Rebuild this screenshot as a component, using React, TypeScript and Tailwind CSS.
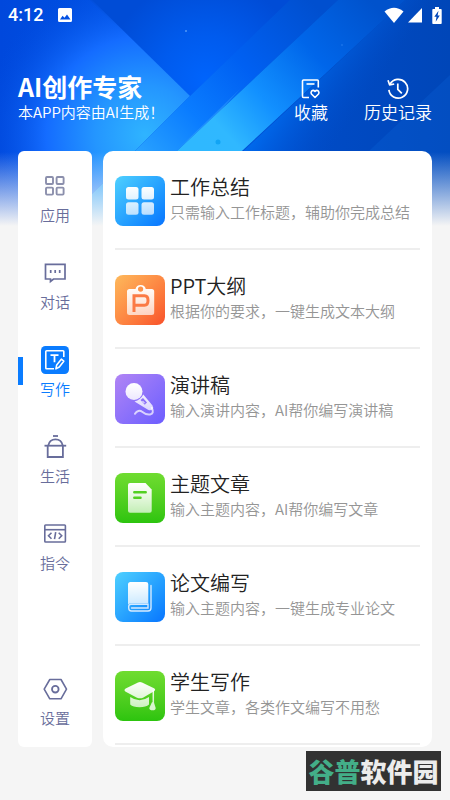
import type { ReactNode } from "react";

const HeaderBackground = () => {
  return (
    <svg
      className="absolute inset-x-0 top-0 -z-10 h-[226px] w-full"
      viewBox="0 0 450 226"
      preserveAspectRatio="none"
      aria-hidden="true"
    >
      <defs>
        <linearGradient id="base" x1="0" y1="0" x2="1" y2="0">
          <stop offset="0" stopColor="#0048dc" />
          <stop offset="0.4" stopColor="#0056e6" />
          <stop offset="0.7" stopColor="#004bc6" />
          <stop offset="1" stopColor="#0046b8" />
        </linearGradient>
        <radialGradient id="glow" gradientUnits="userSpaceOnUse" cx="145" cy="135" r="165">
          <stop offset="0" stopColor="#2fb4ff" />
          <stop offset="0.3" stopColor="#2496ff" />
          <stop offset="0.6" stopColor="#146cff" />
          <stop offset="1" stopColor="#004ce0" stopOpacity="0" />
        </radialGradient>
        <radialGradient id="mid" gradientUnits="userSpaceOnUse" cx="205" cy="80" r="100">
          <stop offset="0" stopColor="#0064fc" />
          <stop offset="0.45" stopColor="#005bee" />
          <stop offset="1" stopColor="#004cd6" />
        </radialGradient>
        <linearGradient id="bandA" gradientUnits="userSpaceOnUse" x1="310" y1="0" x2="140" y2="160">
          <stop offset="0" stopColor="#004fcf" />
          <stop offset="0.4" stopColor="#0060f2" />
          <stop offset="0.7" stopColor="#0a7cff" />
          <stop offset="1" stopColor="#2aa4ff" />
        </linearGradient>
        <linearGradient id="bandB" gradientUnits="userSpaceOnUse" x1="370" y1="0" x2="205" y2="150">
          <stop offset="0" stopColor="#0052cc" />
          <stop offset="0.35" stopColor="#0066ea" />
          <stop offset="0.65" stopColor="#1290ff" />
          <stop offset="0.88" stopColor="#30b8ff" />
          <stop offset="1" stopColor="#2fb8ff" />
        </linearGradient>
        <linearGradient id="bandC" gradientUnits="userSpaceOnUse" x1="255" y1="120" x2="320" y2="165">
          <stop offset="0" stopColor="#0070f4" />
          <stop offset="1" stopColor="#004fcc" stopOpacity="0" />
        </linearGradient>
        <linearGradient id="fade" x1="0" y1="0" x2="0" y2="1">
          <stop offset="0" stopColor="#f5f5f5" stopOpacity="0" />
          <stop offset="1" stopColor="#f5f5f5" />
        </linearGradient>
      </defs>
      <rect width="450" height="226" fill="url(#base)" />
      <path d="M90 0L292 0L188 98Z" fill="url(#mid)" />
      <path d="M0 0H92L190 96L60 226H0Z" fill="url(#glow)" />
      <path d="M290 0H338L178 150L98 226H60L190 96Z" fill="url(#bandA)" />
      <path d="M405 0L163 226H450V0Z" fill="url(#bandC)" />
      <path d="M338 0H405L243 150L163 226H98L178 150Z" fill="url(#bandB)" />
      <path d="M177 150L240 89L222 109L195 134Z" fill="#5dcbff" opacity="0.25" />
      <path d="M450 75L370 150L300 226H450Z" fill="#0a62d8" opacity="0.3" />
      <circle cx="186" cy="31" r="0.8" fill="#8cc4ff" />
      <circle cx="218" cy="142" r="2.5" fill="#12a4f4" />
      <circle cx="342" cy="45" r="0.8" fill="#2a80f0" />
      <rect y="152" width="450" height="74" fill="url(#fade)" />
    </svg>
  );
};

const StatusBar = () => {
  return (
    <div className="flex h-[30px] items-center px-2 text-white">
      <span className="font-[Roboto,sans-serif] text-lg leading-5 font-medium">4:12</span>
      <svg className="ml-[14px]" width="16" height="16" viewBox="0 0 16 16" aria-hidden="true">
        <path
          fillRule="evenodd"
          fill="currentColor"
          d="M2.5 1h11A1.5 1.5 0 0 1 15 2.5v11a1.5 1.5 0 0 1-1.5 1.5h-11A1.5 1.5 0 0 1 1 13.5v-11A1.5 1.5 0 0 1 2.5 1ZM3 12.500h10.500L10 7.500 7.500 10.800 5.600 8.700Z"
        />
      </svg>
      <div className="ml-auto flex items-center">
        <svg width="20" height="17" viewBox="0 0 20 17" aria-hidden="true">
          <path d="M0.500 4.500Q10-3 19.500 4.500L10 16Z" fill="currentColor" />
        </svg>
        <svg className="ml-1" width="14" height="16" viewBox="0 0 14 16" aria-hidden="true">
          <path d="M14 1V15.500H0Z" fill="currentColor" />
        </svg>
        <svg className="ml-[10px]" width="10" height="17" viewBox="0 0 10 17" aria-hidden="true">
          <path d="M3 0H7V2H9Q9.700 2 9.700 3V16Q9.700 17 9 17H1Q0.300 17 0.300 16V3Q0.300 2 1 2H3Z" fill="currentColor" />
          <path d="M6.500 3.800L2.300 9.800H4.500L3.700 14.800L7.800 8.600H5.600Z" fill="#0046b8" />
        </svg>
      </div>
    </div>
  );
};

const CollectIcon = () => (
  <svg width="22" height="22" viewBox="0 0 22 22" fill="none" stroke="currentColor" strokeWidth="1.6" aria-hidden="true">
    <path d="M18.300 9.500V3Q18.300 2 17.300 2H3.500Q2.500 2 2.500 3V18.500Q2.500 19.500 3.500 19.500H9" />
    <path d="M6.500 6H14.500" />
    <path
      d="M15 19.500L11.500 16Q10.500 14.500 11.500 13.100Q13.400 11.600 15 13.500Q16.600 11.600 18.500 13.100Q19.500 14.500 18.500 16Z"
      strokeLinejoin="round"
    />
  </svg>
);

const HistoryIcon = () => (
  <svg width="22" height="22" viewBox="0 0 22 22" fill="none" stroke="currentColor" strokeWidth="1.7" aria-hidden="true">
    <path d="M3 6.200A9.400 9.400 0 1 1 1.900 11.800" />
    <path d="M1 2.200L2.600 6.800L7.200 6" strokeLinejoin="round" />
    <path d="M10.800 5.500V11.300L14.800 15.300" />
  </svg>
);

const AppsIcon = () => (
  <svg width="28" height="28" viewBox="0 0 28 28" fill="none" stroke="#8b8fac" strokeWidth="1.9" aria-hidden="true">
    <rect x="5" y="5" width="7" height="7" rx="1" />
    <rect x="15.600" y="5" width="7" height="7" rx="1" />
    <rect x="5" y="15.600" width="7" height="7" rx="1" />
    <rect x="15.600" y="15.600" width="7" height="7" rx="1" />
  </svg>
);

const ChatIcon = () => (
  <svg width="28" height="28" viewBox="0 0 28 28" fill="none" stroke="currentColor" strokeWidth="1.7" aria-hidden="true">
    <path d="M4.500 5.400H24V20H12.500L9.500 22.500V20H4.500Z" />
    <path d="M9.700 11V14M14.200 11V14M18.700 11V14" />
  </svg>
);

const WriteIcon = () => (
  <svg width="28" height="28" viewBox="0 0 28 28" fill="none" stroke="#fff" strokeWidth="1.6" aria-hidden="true">
    <rect width="28" height="28" rx="4.500" fill="#0a7cff" stroke="none" />
    <path d="M22.800 11V5.500Q22.800 4.700 22 4.700H5.600Q4.800 4.700 4.800 5.500V22Q4.800 22.800 5.600 22.800H13" />
    <path d="M9.500 9.200H17.500M13.500 9.200V16.200" strokeWidth="1.8" />
    <path d="M14.900 22.900L15.700 18.900L20.300 13.200L22.800 15.200L18.300 21Z" strokeLinejoin="round" />
  </svg>
);

const LifeIcon = () => (
  <svg width="28" height="28" viewBox="0 0 28 28" fill="none" stroke="currentColor" strokeWidth="1.8" aria-hidden="true">
    <path d="M12 3H17" />
    <path d="M7.300 12.500Q8.500 6.400 14.500 6.400Q20.500 6.400 21.700 12.500" />
    <path d="M3.500 12.700H25.200" />
    <path d="M6.700 12.700V24H21.900V12.700" />
  </svg>
);

const CommandIcon = () => (
  <svg width="28" height="28" viewBox="0 0 28 28" fill="none" stroke="currentColor" strokeWidth="1.6" aria-hidden="true">
    <rect x="3.800" y="5" width="20.600" height="17" rx="0.800" />
    <path d="M3.800 9.700H24.400" />
    <path d="M10.500 12.700L7.500 15.700L10.500 18.700M17.700 12.700L20.700 15.700L17.700 18.700M14.700 12.200L13.500 19.200" />
  </svg>
);

const SettingIcon = () => (
  <svg width="28" height="28" viewBox="0 0 28 28" fill="none" stroke="currentColor" strokeWidth="1.6" aria-hidden="true">
    <path d="M8.800 4.500H20L25.500 14.200L20 23.800H8.800L3.200 14.200Z" strokeLinejoin="round" />
    <circle cx="14.300" cy="14.200" r="3.300" strokeWidth="1.8" />
  </svg>
);

// White glyphs on the tiles fade slightly towards the bottom
const Tile = ({ className, children }: { className: string; children: ReactNode }) => (
  <span className={`block size-[50px] shrink-0 overflow-hidden rounded-lg ${className}`}>
    <svg width="50" height="50" viewBox="0 0 50 50" fill="none" aria-hidden="true">
      <defs>
        <linearGradient id="glyph" gradientUnits="userSpaceOnUse" x1="0" y1="10" x2="0" y2="40">
          <stop offset="0" stopColor="#fff" />
          <stop offset="1" stopColor="#fff" stopOpacity="0.68" />
        </linearGradient>
      </defs>
      {children}
    </svg>
  </span>
);

const tileBlue = "bg-linear-to-br from-[#4fd0ff] to-[#0a74ff]";
const tileOrange = "bg-linear-to-br from-[#fdb95c] to-[#f8502a]";
const tilePurple = "bg-linear-to-br from-[#b184f4] to-[#6c5cff]";
const tileGreen = "bg-linear-to-b from-[#6fdc30] to-[#2cc40e]";

const items = [
  {
    title: "工作总结",
    desc: "只需输入工作标题，辅助你完成总结",
    icon: (
      <Tile className={tileBlue}>
        <g fill="url(#glyph)">
          <rect x="11" y="11" width="12.500" height="12.500" rx="2.500" />
          <rect x="26.500" y="11" width="12.500" height="12.500" rx="2.500" />
          <rect x="11" y="26.300" width="12.500" height="12.500" rx="2.500" />
          <rect x="26.500" y="26.300" width="12.500" height="12.500" rx="2.500" />
        </g>
      </Tile>
    ),
  },
  {
    title: "PPT大纲",
    desc: "根据你的要求，一键生成文本大纲",
    icon: (
      <Tile className={tileOrange}>
        <path
          fill="url(#glyph)"
          fillRule="evenodd"
          d="M14.500 14H20.500A5.300 5.300 0 0 1 30.800 14H36.700Q39.200 14 39.200 16.500V37.500Q39.200 40 36.700 40H14.500Q12 40 12 37.500V16.500Q12 14 14.500 14ZM25.600 11.500A2.600 2.600 0 1 0 25.600 16.700A2.600 2.600 0 1 0 25.600 11.500Z"
        />
        <path d="M19 37V20.800H29.500Q33 20.800 33 25.500Q33 30.200 29.500 30.200H19" stroke="#fb7a44" strokeWidth="3" />
      </Tile>
    ),
  },
  {
    title: "演讲稿",
    desc: "输入演讲内容，AI帮你编写演讲稿",
    icon: (
      <Tile className={tilePurple}>
        <circle cx="19" cy="17.500" r="8.500" fill="url(#glyph)" />
        <path d="M19.500 27.500Q25.500 26 28.300 20.500L37.500 31.500Q39 33.800 37.200 35.500Q35.500 37 33 35.800Z" fill="url(#glyph)" />
        <path d="M25.500 26L28 24L32 28.500L29.800 30.700Z" fill="#8d72f8" />
        <path d="M27.500 27L29.600 29.200" stroke="#fff" strokeWidth="1" />
        <path
          d="M36.800 34Q39.500 39.500 35 40.500Q31 41 27.500 38Q23 35 20 39.800"
          stroke="url(#glyph)"
          strokeWidth="2"
          strokeLinecap="round"
        />
      </Tile>
    ),
  },
  {
    title: "主题文章",
    desc: "输入主题内容，AI帮你编写文章",
    icon: (
      <Tile className={tileGreen}>
        <path
          fill="url(#glyph)"
          d="M15 10H30.500L36.700 16.500V37.700Q36.700 39.700 34.700 39.700H15Q13 39.700 13 37.700V12Q13 10 15 10Z"
        />
        <path d="M19.300 19.300H30.700M19.300 24.800H25.500" stroke="#52d022" strokeWidth="2.5" strokeLinecap="round" />
      </Tile>
    ),
  },
  {
    title: "论文编写",
    desc: "输入主题内容，一键生成专业论文",
    icon: (
      <Tile className={tileBlue}>
        <path
          fill="url(#glyph)"
          d="M15.500 10H31Q33.300 10 33.300 12.300V31.500H15Q13 31.500 13 33V12.500Q13 10 15.500 10Z"
        />
        <path
          d="M36 13.500V36Q36 39 33 39H16.500Q13.700 39 13.700 36V34.500Q13.700 32.200 16 32.200H33V36H16.500"
          stroke="#d6eaff"
          strokeWidth="1.4"
          strokeLinecap="round"
        />
      </Tile>
    ),
  },
  {
    title: "学生写作",
    desc: "学生文章，各类作文编写不用愁",
    icon: (
      <Tile className={tileGreen}>
        <path
          fill="url(#glyph)"
          d="M23 11.500Q25 10.700 27 11.500L39 17.200Q41.300 18.800 39 20.300L28 26.700Q25 28 22 26.700L10.700 20.800Q8.300 19.200 10.700 17.500Z"
        />
        <path
          fill="url(#glyph)"
          d="M15.200 26Q24.500 32.500 34 26V33.500Q31 36.300 24.500 36.300Q18 36.300 15.200 33.500Z"
        />
        <path d="M38.300 19V32" stroke="url(#glyph)" strokeWidth="1.5" />
        <path fill="#d7f6ce" d="M36.800 31.500Q38 30.500 39 31.500L40.700 37Q40.700 39.300 37.700 39.300Q34.300 39.300 34.300 37Z" />
      </Tile>
    ),
  },
];

const NavItem = ({ label, icon, active }: { label: string; icon: ReactNode; active?: boolean }) => {
  return (
    <button
      type="button"
      aria-current={active ? "page" : undefined}
      className={`relative flex w-full flex-col items-center gap-[5px] text-[15px] leading-5 ${
        active ? "text-[#0a7cff]" : "text-[#686d9b]"
      }`}
    >
      {active && <span className="absolute top-[11px] left-0 h-7 w-[5px] bg-[#0a7cff]" />}
      {icon}
      <span>{label}</span>
    </button>
  );
};

export default function App() {
  return (
    <div
      lang="zh-CN"
      className="relative isolate flex min-h-screen flex-col bg-[#f5f5f5] font-['Noto_Sans_CJK_SC',sans-serif] font-[350]"
    >
      <HeaderBackground />
      <StatusBar />

      <header className="flex h-[121px] items-start justify-between px-[18px] pt-[42px] text-white">
        <div>
          <h1 className="text-[25px] leading-7 font-bold">AI创作专家</h1>
          <p className="text-[15px] leading-6">本APP内容由AI生成！</p>
        </div>
        <div className="flex gap-9 pt-1.5 text-[17px] leading-6">
          <button type="button" className="flex flex-col items-center">
            <CollectIcon />
            <span>收藏</span>
          </button>
          <button type="button" className="flex flex-col items-center">
            <HistoryIcon />
            <span>历史记录</span>
          </button>
        </div>
      </header>

      <main className="flex gap-[11px] px-[18px]">
        <nav className="flex w-[74px] shrink-0 flex-col gap-[34px] rounded-md bg-white pt-[21px] pb-[19px]">
          <NavItem label="应用" icon={<AppsIcon />} />
          <NavItem label="对话" icon={<ChatIcon />} />
          <NavItem label="写作" icon={<WriteIcon />} active />
          <NavItem label="生活" icon={<LifeIcon />} />
          <NavItem label="指令" icon={<CommandIcon />} />
          <div className="mt-auto">
            <NavItem label="设置" icon={<SettingIcon />} />
          </div>
        </nav>

        <ul className="min-w-0 flex-1 rounded-[10px] bg-white px-3 pb-0.5">
          {items.map((item) => (
            <li key={item.title} className="border-b-2 border-[#eeeeee]">
              <button type="button" className="flex w-full gap-[5px] pt-[25px] pb-[22px] text-left">
                {item.icon}
                <span className="flex min-w-0 flex-col">
                  <span className="text-xl leading-[22px] text-[#222222]">{item.title}</span>
                  <span className="text-[15px] leading-7 text-[#959595]">{item.desc}</span>
                </span>
              </button>
            </li>
          ))}
        </ul>
      </main>

      <div className="absolute right-[9px] bottom-[9px] flex h-10 w-[135px] items-center justify-center bg-[#323232] text-[26px] leading-10 font-black text-[#ececec]">
        <span className="text-[#43ae88]">谷普</span>软件园
      </div>
    </div>
  );
}
